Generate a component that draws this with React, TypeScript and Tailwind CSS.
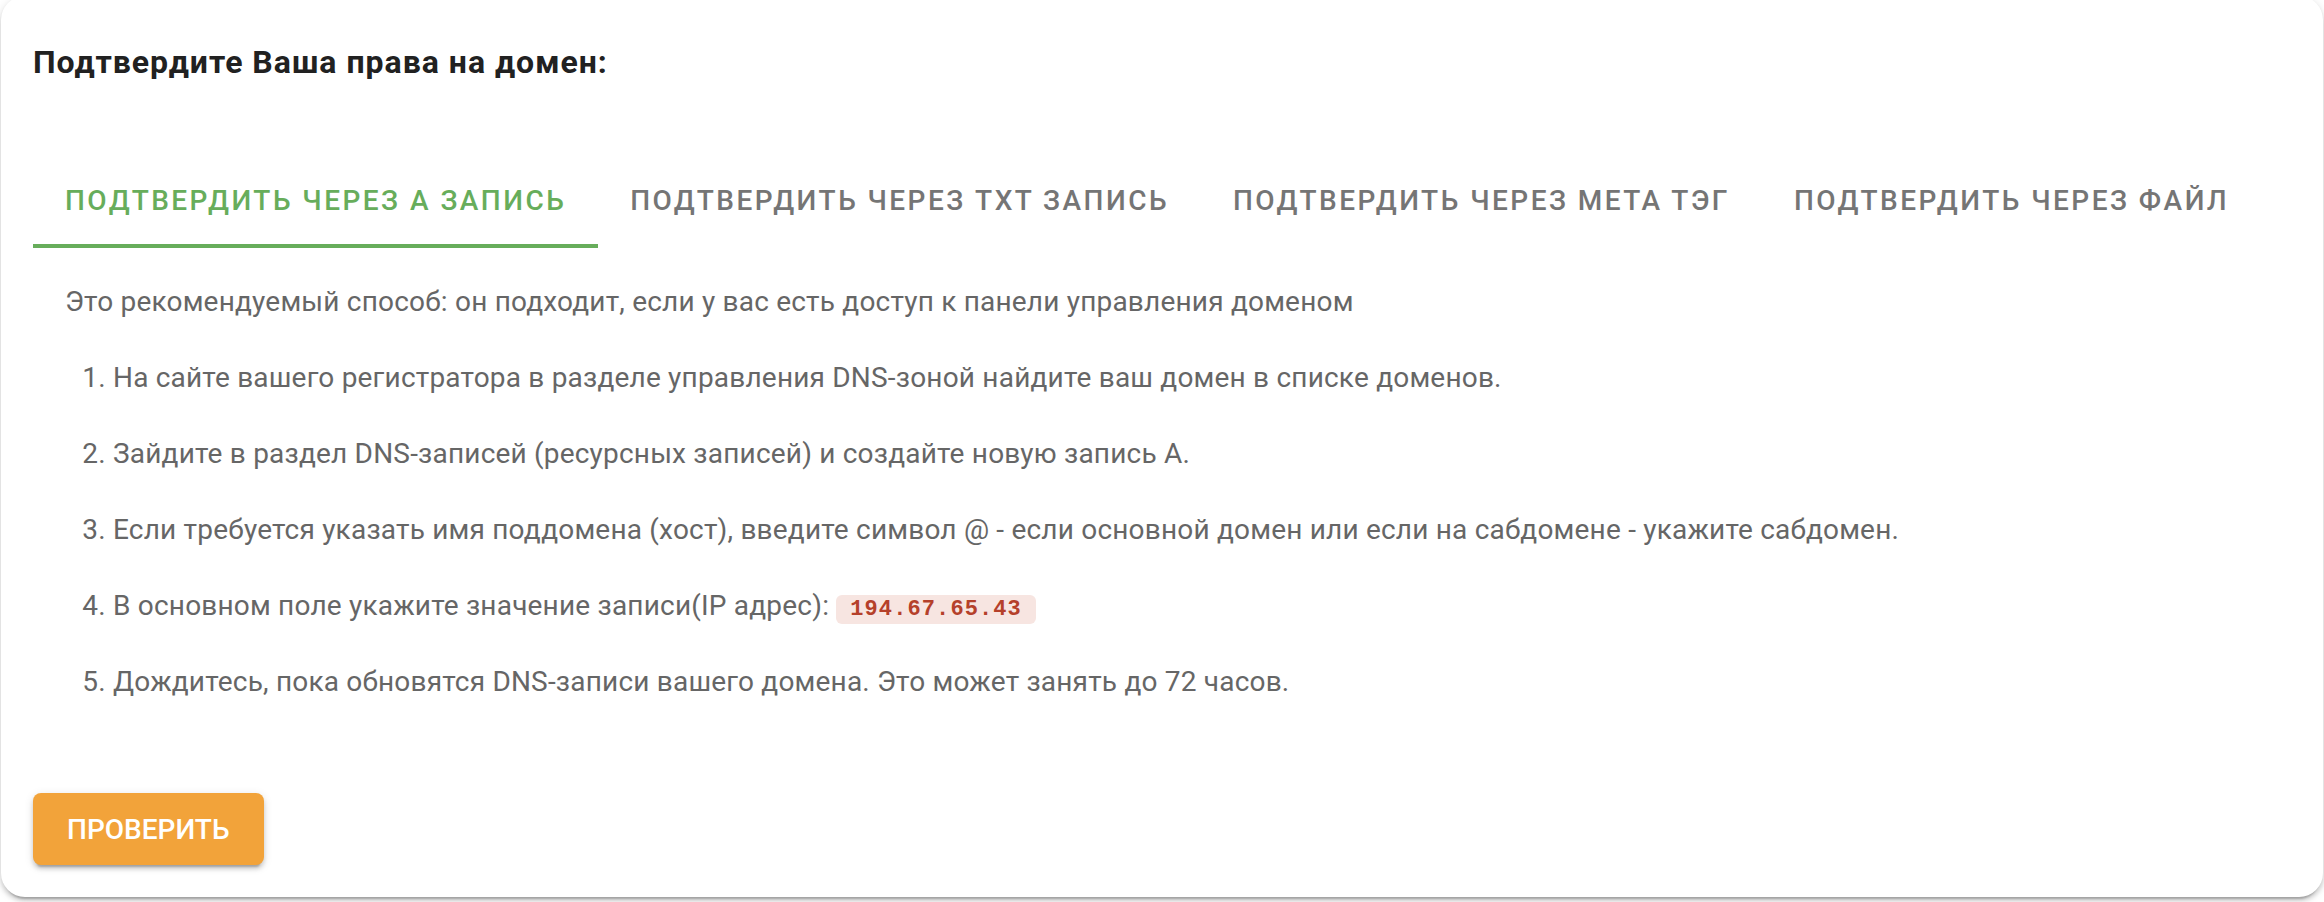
const tabs = ['Подтвердить через А запись', 'Подтвердить через TXT запись', 'Подтвердить через МЕТА тэг', 'Подтвердить через файл'];

const steps = [
  'На сайте вашего регистратора в разделе управления DNS-зоной найдите ваш домен в списке доменов.',
  'Зайдите в раздел DNS-записей (ресурсных записей) и создайте новую запись А.',
  'Если требуется указать имя поддомена (хост), введите символ @ - если основной домен или если на сабдомене - укажите сабдомен.',
];

export default function App() {
  return (
    <main className="overflow-hidden bg-white px-px pb-3 font-['Roboto',sans-serif]">
      <section className="-mt-1 rounded-[24px] bg-white px-8 pb-8 pt-11 shadow-[0_6px_2px_-4px_rgba(0,0,0,0.2),0_4px_4px_rgba(0,0,0,0.14),0_2px_10px_rgba(0,0,0,0.12)]">
        <h1 className="text-[32px] font-bold leading-[44px] tracking-[0.031em] text-[#212121]">Подтвердите Ваша права на домен:</h1>
        <div role="tablist" className="mt-[68px] flex">
          {tabs.map((t, i) => (
            <button
              key={t}
              role="tab"
              type="button"
              aria-selected={i === 0}
              className={
                'h-24 whitespace-nowrap px-8 pt-0.5 text-[28px] font-medium uppercase tracking-[0.088em] ' +
                (i === 0 ? 'text-[#67ad5b] shadow-[inset_0_-4px_0_#67ad5b]' : 'text-[#757575]')
              }
            >
              {t}
            </button>
          ))}
        </div>
        <div role="tabpanel" className="px-8 pt-8 text-[28px] leading-[44px] tracking-[0.007em] text-[#666666]">
          <p>Это рекомендуемый способ: он подходит, если у вас есть доступ к панели управления доменом</p>
          <ol className="mt-8 flex list-decimal flex-col gap-8 pl-12">
            {steps.map((s) => (
              <li key={s}>{s}</li>
            ))}
            <li>
              В основном поле укажите значение записи(IP адрес):{' '}
              <code className="rounded-md bg-[#f7e5e1] px-3.5 py-0.5 font-['Liberation_Mono',monospace] text-[22px] font-bold leading-none tracking-wider text-[#b5402a]">194.67.65.43</code>
            </li>
            <li>Дождитесь, пока обновятся DNS-записи вашего домена. Это может занять до 72 часов.</li>
          </ol>
        </div>
        <button
          type="button"
          className="mt-[89px] block h-[72px] rounded-lg bg-[#f2a33a] px-[34px] pt-0.5 text-[28px] font-medium uppercase text-white shadow-[0_6px_2px_-4px_rgba(0,0,0,0.2),0_4px_4px_rgba(0,0,0,0.14),0_2px_10px_rgba(0,0,0,0.12)]"
        >
          Проверить
        </button>
      </section>
    </main>
  );
}
